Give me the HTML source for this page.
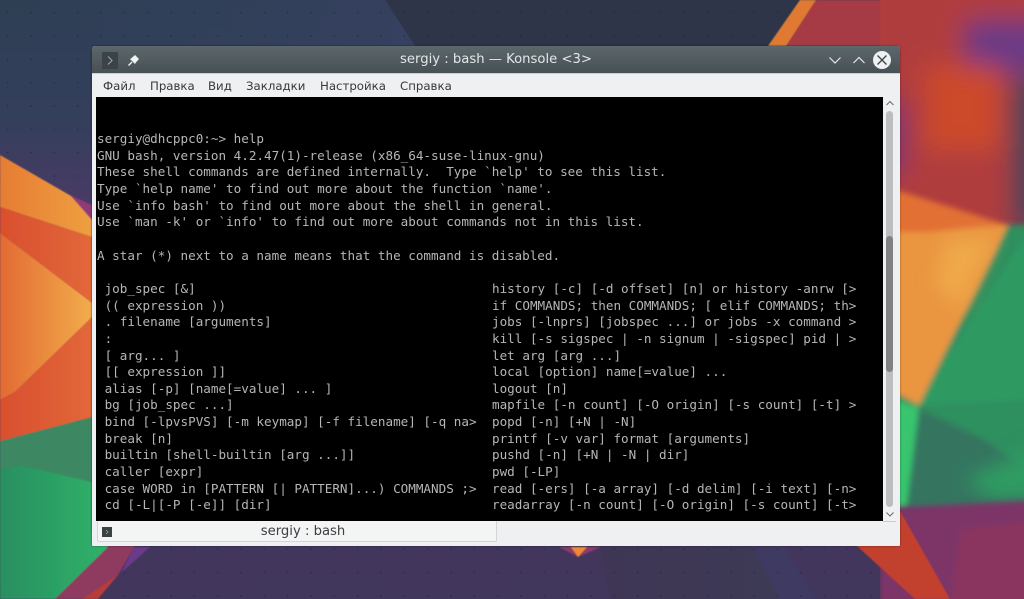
<!DOCTYPE html>
<html><head><meta charset="utf-8"><style>
html,body{margin:0;padding:0;width:1024px;height:599px;overflow:hidden;background:#3a3a58}
#bg{position:absolute;left:0;top:0}
.win{position:absolute;left:92px;top:46px;width:808px;height:500px;background:#eff0f1;border-radius:3px 3px 1px 1px;box-shadow:0 0 2px rgba(0,0,0,.4);overflow:hidden}
.tb{position:absolute;left:0;top:0;width:808px;height:27px;background:linear-gradient(#5c676c,#475055)}
.cy{position:absolute;left:0;top:27px;width:808px;height:1px;background:#a3dcef}
.t{position:absolute;white-space:pre;font-family:"DejaVu Sans",sans-serif}
.title{left:0;width:808px;text-align:center;top:6px;font-size:13.2px;line-height:16px;color:#e4e7e8;filter:blur(.2px)}
.m{top:32px;font-size:11.75px;line-height:16px;color:#33393d;filter:blur(.2px)}
.term{position:absolute;left:4px;top:51px;width:787px;height:424px;background:#000;overflow:hidden}
pre{position:absolute;margin:0;font-family:"DejaVu Sans Mono","Liberation Mono",monospace;font-size:12.62px;line-height:16.64px;color:#b6b6b6;filter:blur(.3px)}
.sb{position:absolute;left:794px;width:7px;background:#bcbdbe}
.tab{position:absolute;left:5px;top:475px;width:398px;height:20px;background:#f3f4f4;border:1px solid #d3d5d6;border-top:0;border-radius:0 0 2px 2px}
</style></head><body>
<svg id="bg" width="1024" height="599" viewBox="0 0 1024 599">
<defs>
<linearGradient id="d" x1="0" y1="0" x2="0" y2="1"><stop offset="0" stop-color="#2e3f54"/><stop offset=".2" stop-color="#343f5c"/><stop offset=".36" stop-color="#4c3a66"/><stop offset="1" stop-color="#41365c"/></linearGradient>
<linearGradient id="s" x1="0" y1="0" x2="1" y2="0"><stop offset="0" stop-color="#30405a" stop-opacity="0"/><stop offset="1" stop-color="#364060"/></linearGradient>
<linearGradient id="o1" x1="0" y1="0" x2="1" y2="0"><stop offset="0" stop-color="#e67c34"/><stop offset="1" stop-color="#ee9f40"/></linearGradient>
<linearGradient id="o2" x1="0" y1="0" x2="1" y2="0"><stop offset="0" stop-color="#d94f2e"/><stop offset="1" stop-color="#e2683a"/></linearGradient>
<linearGradient id="o3" x1="0" y1="0" x2="1" y2="0"><stop offset="0" stop-color="#e26a33"/><stop offset="1" stop-color="#f2ad4c"/></linearGradient>
<linearGradient id="g1" x1="0" y1="0" x2="1" y2="0"><stop offset="0" stop-color="#2a8f62"/><stop offset="1" stop-color="#2fb268"/></linearGradient>
<linearGradient id="mid" x1="0" y1="0" x2="1" y2="0"><stop offset="0" stop-color="#3f3655"/><stop offset="1" stop-color="#3c3a55"/></linearGradient>
<pattern id="dots" width="23.33" height="23.33" patternUnits="userSpaceOnUse" x="6" y="11"><rect x="1" y="1" width="1.3" height="1.3" fill="#1a1a2a" opacity=".55"/></pattern>
<filter id="b1"><feGaussianBlur stdDeviation=".6"/></filter>
<filter id="b3" x="-20%" y="-20%" width="140%" height="140%"><feGaussianBlur stdDeviation="3"/></filter>
<filter id="b5" x="-30%" y="-30%" width="160%" height="160%"><feGaussianBlur stdDeviation="9"/></filter>
<filter id="b4" x="-30%" y="-30%" width="160%" height="160%"><feGaussianBlur stdDeviation="13"/></filter>
<clipPath id="cr"><rect x="880" y="-1" width="145" height="601"/></clipPath>
</defs>
<rect width="1024" height="599" fill="url(#d)"/>
<polygon points="385,0 800,0 768,46 415,46" fill="#2e3549"/>
<polygon points="0,0 385,0 415,46 0,46" fill="url(#s)"/>
<polygon points="752,547 785,547 815,599 780,599" fill="#3f3a62"/>
<polygon points="600,547 752,547 780,599 610,599" fill="url(#mid)"/>
<rect width="1024" height="599" fill="url(#dots)"/>
<g filter="url(#b1)">
<polygon points="0,155 92,208 92,237 0,207" fill="url(#o1)"/>
<polygon points="70,195 92,205 92,220" fill="#8f3a78"/>
<polygon points="0,207 92,237 92,303 0,233" fill="url(#o2)"/>
<polygon points="0,233 92,303 92,317 15,392 0,400" fill="url(#o3)"/>
<polygon points="0,400 15,392 92,317 92,417 0,441" fill="url(#o2)"/>
<polygon points="0,441 92,417 92,482 20,465 0,470" fill="#3d8862"/>
<polygon points="0,470 20,465 92,482 92,530 108,547 55,599 0,599" fill="url(#g1)"/>
<polygon points="92,530 134,530 134,547 118,575 82,599 55,599 108,547" fill="#8f3a60"/>
<polygon points="118,575 82,599 98,599" fill="#b83c38"/>
<polygon points="134,547 150,547 121,573" fill="#6a3a8a"/>
<polygon points="559,547 601,547 578,557" fill="#8d3a6a"/>
<polygon points="571,547 587,547 578,557" fill="#f08a30"/>
<polygon points="800,0 816,0 786,46 768,46" fill="#e07a30"/>
<polygon points="816,0 900,0 900,46 786,46" fill="#a63a45"/>
</g>
<g clip-path="url(#cr)">
<g filter="url(#b4)">
<rect x="860" y="-30" width="190" height="270" fill="#b03c3c"/>
<rect x="965" y="20" width="90" height="55" fill="#6a3a85"/>
<rect x="1012" y="80" width="40" height="150" fill="#3c4258"/>
<rect x="925" y="65" width="75" height="85" fill="#cc482b"/>
<rect x="860" y="100" width="45" height="75" fill="#7a3670"/>
</g>
<g filter="url(#b3)">
<polygon points="880,225 1040,225 1040,510 880,510" fill="#2f8f5f"/>
<polygon points="945,360 1030,230 1030,400 919,405" fill="#2f9a62"/>
<polygon points="919,408 985,440 1040,480 1040,505 905,508" fill="#347560"/>
<polygon points="880,395 919,408 906,510 880,510" fill="#38c56e"/>
<polygon points="880,185 985,218 1008,225 919,405 880,385" fill="#ea953f"/>
<polygon points="880,185 985,218 1008,225 930,232 880,232" fill="#e27034"/>
</g>
<g filter="url(#b5)">
<polygon points="965,480 1040,445 1040,498 990,498" fill="#2e9c62"/>
<polygon points="945,240 995,236 960,310 935,285" fill="#efa848"/>
</g>
<g filter="url(#b3)">
<polygon points="880,508 1040,500 1040,610 880,610" fill="#7d3668"/>
<polygon points="960,530 1040,520 1040,610 950,610" fill="#8a3560"/>
</g>
</g>
<g filter="url(#b1)">
<polygon points="856,545 900,511 950,599 915,599" fill="#c2402e"/>
</g>
</svg>
<div class="win">
<div class="tb"></div><div class="cy"></div>
<svg style="position:absolute;left:0;top:0" width="808" height="27" viewBox="0 0 808 27">
<rect x="10" y="6" width="16" height="17" rx="1" fill="#3c4346"/>
<path d="M16 10.5 L20 14.5 L16 18.5" fill="none" stroke="#9aa0a2" stroke-width="1.2"/>
<path d="M36.5 19.5 L40 16" stroke="#f2f3f3" stroke-width="1.3" fill="none"/>
<path d="M39 12.5 L43 9 L47 13 L43.5 17 L43 18 L38 13 Z" fill="#f2f3f3"/>
<path d="M737.5 11.5 L743 17 L748.5 11.5" fill="none" stroke="#e6e8e9" stroke-width="1.2"/>
<path d="M761.5 17 L767 11.5 L772.5 17" fill="none" stroke="#e6e8e9" stroke-width="1.2"/>
<circle cx="790" cy="14" r="9" fill="#eff0f1"/>
<path d="M785.5 9.5 L794.5 18.5 M794.5 9.5 L785.5 18.5" stroke="#40484c" stroke-width="1.4" fill="none"/>
</svg>
<div class="t title">sergiy : bash — Konsole &lt;3&gt;</div>
<div class="t m" style="left:11px">Файл</div>
<div class="t m" style="left:58px">Правка</div>
<div class="t m" style="left:116px">Вид</div>
<div class="t m" style="left:154px">Закладки</div>
<div class="t m" style="left:228px">Настройка</div>
<div class="t m" style="left:308px">Справка</div>
<div class="term">
<pre style="left:1px;top:34.2px">sergiy@dhcppc0:~&gt; help
GNU bash, version 4.2.47(1)-release (x86_64-suse-linux-gnu)
These shell commands are defined internally.  Type `help' to see this list.
Type `help name' to find out more about the function `name'.
Use `info bash' to find out more about the shell in general.
Use `man -k' or `info' to find out more about commands not in this list.

A star (*) next to a name means that the command is disabled.

 job_spec [&amp;]
 (( expression ))
 . filename [arguments]
 :
 [ arg... ]
 [[ expression ]]
 alias [-p] [name[=value] ... ]
 bg [job_spec ...]
 bind [-lpvsPVS] [-m keymap] [-f filename] [-q na&gt;
 break [n]
 builtin [shell-builtin [arg ...]]
 caller [expr]
 case WORD in [PATTERN [| PATTERN]...) COMMANDS ;&gt;
 cd [-L|[-P [-e]] [dir]</pre>
<pre style="left:396px;top:184px">history [-c] [-d offset] [n] or history -anrw [&gt;
if COMMANDS; then COMMANDS; [ elif COMMANDS; th&gt;
jobs [-lnprs] [jobspec ...] or jobs -x command &gt;
kill [-s sigspec | -n signum | -sigspec] pid | &gt;
let arg [arg ...]
local [option] name[=value] ...
logout [n]
mapfile [-n count] [-O origin] [-s count] [-t] &gt;
popd [-n] [+N | -N]
printf [-v var] format [arguments]
pushd [-n] [+N | -N | dir]
pwd [-LP]
read [-ers] [-a array] [-d delim] [-i text] [-n&gt;
readarray [-n count] [-O origin] [-s count] [-t&gt;</pre>
</div>
<svg style="position:absolute;left:792px;top:51px" width="12" height="14"><path d="M2.5 8 L6 4.5 L9.5 8" fill="none" stroke="#6a6f72" stroke-width="1.1"/></svg>
<div class="sb" style="top:65px;height:396px;border-radius:3.5px"></div>
<div class="sb" style="top:190px;height:136px;border-radius:3.5px;background:#808182"></div>
<svg style="position:absolute;left:792px;top:462px" width="12" height="12"><path d="M2.5 4.5 L6 8 L9.5 4.5" fill="none" stroke="#6a6f72" stroke-width="1.1"/></svg>
<div style="position:absolute;left:791px;top:475px;width:13px;height:1px;background:#c9cbcc"></div>
<div class="tab"></div>
<svg style="position:absolute;left:10px;top:481px" width="11" height="10"><rect width="10" height="10" fill="#3c4144"/><path d="M4 3 L6 5 L4 7" fill="none" stroke="#9a9fa1" stroke-width=".8"/></svg>
<div class="t" style="left:5px;width:412px;text-align:center;top:478px;font-size:13.2px;line-height:16px;color:#3a4044">sergiy : bash</div>
</div>
</body></html>
